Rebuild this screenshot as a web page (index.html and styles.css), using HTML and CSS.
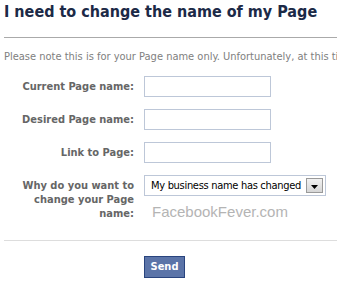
FILE: index.html
```html
<!DOCTYPE html>
<html>
<head>
<meta charset="utf-8">
<link rel="stylesheet" href="styles.css">
</head>
<body>
<div class="page">
  <h2 class="title">I need to change the name of my Page</h2>
  <div class="rule"></div>
  <p class="note">Please note this is for your Page name only. Unfortunately, at this time we are unable to change Page usernames.</p>
  <form class="form">
    <div class="row">
      <label class="label">Current Page name:</label>
      <div class="field"><input class="input" type="text"></div>
    </div>
    <div class="row">
      <label class="label">Desired Page name:</label>
      <div class="field"><input class="input" type="text"></div>
    </div>
    <div class="row">
      <label class="label">Link to Page:</label>
      <div class="field"><input class="input" type="text"></div>
    </div>
    <div class="row row-top">
      <label class="label label-multi">Why do you want to change your Page name:</label>
      <div class="field">
        <div class="select">
          <span class="select-text">My business name has changed</span>
          <span class="select-btn"><svg width="7" height="4" viewBox="0 0 7 4"><path d="M0 0H7L3.5 4Z" fill="#000"/></svg></span>
        </div>
        <div class="watermark">FacebookFever.com</div>
      </div>
    </div>
  </form>
  <div class="rule rule-light"></div>
  <div class="actions">
    <button class="send" type="button">Send</button>
  </div>
</div>
</body>
</html>
```

FILE: styles.css
```css
html, body {
  margin: 0;
  padding: 0;
  background: #fff;
}
.page {
  padding-left: 4px;
  width: 333px;
  overflow: hidden;
  font-family: "DejaVu Sans", sans-serif;
}
.title {
  margin: 0;
  padding-top: 2px;
  font-family: "DejaVu Sans Condensed", "DejaVu Sans", sans-serif;
  font-size: 16px;
  line-height: 19px;
  font-weight: bold;
  color: #1c2a47;
  white-space: nowrap;
}
.rule {
  margin-top: 16px;
  height: 1px;
  background: #aaaaaa;
}
.rule-light {
  background: #dddddd;
  margin-top: 19px;
}
.note {
  margin: 12px 0 0 0;
  font-size: 11px;
  line-height: 14px;
  color: #808080;
  white-space: nowrap;
  overflow: hidden;
  font-family: "DejaVu Sans Condensed", "DejaVu Sans", sans-serif;
}
.form {
  margin-top: 12px;
  display: flex;
  flex-direction: column;
  gap: 12px;
}
.row {
  display: grid;
  grid-template-columns: 130px 182px;
  column-gap: 10px;
  align-items: center;
}
.row-top {
  align-items: start;
}
.label {
  text-align: right;
  font-size: 11px;
  line-height: 14px;
  font-weight: bold;
  color: #666666;
  font-family: "DejaVu Sans Condensed", "DejaVu Sans", sans-serif;
}
.label-multi {
  padding-top: 4px;
  padding-left: 14px;
}
.input {
  box-sizing: border-box;
  width: 127px;
  height: 21px;
  margin: 0;
  border: 1px solid #bdc7d8;
  padding: 2px;
  display: block;
  background: #fff;
}
.select {
  box-sizing: border-box;
  width: 182px;
  height: 21px;
  border: 1px solid #bdc7d8;
  display: flex;
  align-items: center;
  justify-content: space-between;
  padding: 0 2px 0 6px;
}
.select-text {
  font-family: "DejaVu Sans Condensed", "DejaVu Sans", sans-serif;
  font-size: 11px;
  letter-spacing: -0.3px;
  color: #000;
  white-space: nowrap;
}
.select-btn {
  box-sizing: border-box;
  width: 17px;
  height: 15px;
  border: 1px solid #9a9a9a;
  background: linear-gradient(#f2f2f2, #d6d6d6);
  display: flex;
  align-items: center;
  justify-content: center;
  padding-top: 2px;
}
.watermark {
  margin-top: 7px;
  margin-left: 8px;
  font-family: "Liberation Sans", Arial, sans-serif;
  font-size: 15px;
  line-height: 18px;
  color: #b4b4b4;
}
.actions {
  padding-left: 140px;
  margin-top: 14px;
}
.send {
  box-sizing: border-box;
  width: 41px;
  height: 22px;
  margin: 0;
  padding: 0;
  background: #5b74a8;
  border: 1px solid #29447e;
  color: #fff;
  font-family: "DejaVu Sans Condensed", "DejaVu Sans", sans-serif;
  font-size: 11px;
  font-weight: bold;
}
```
